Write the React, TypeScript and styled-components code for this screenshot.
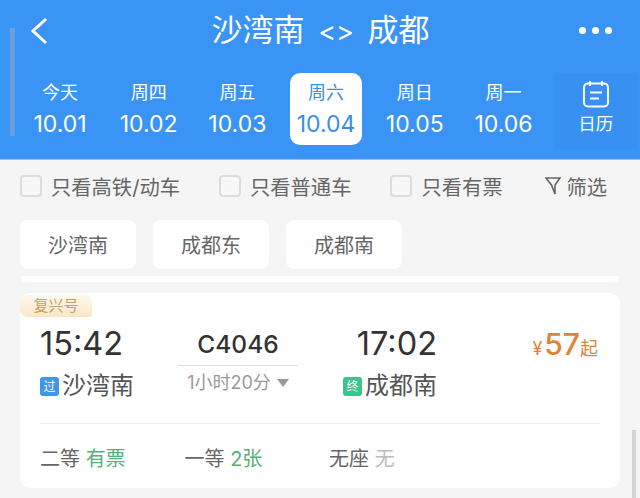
import React from 'react'
import styled, { createGlobalStyle } from 'styled-components'

const days = [
  { week: '今天', date: '10.01' },
  { week: '周四', date: '10.02' },
  { week: '周五', date: '10.03' },
  { week: '周六', date: '10.04', active: true },
  { week: '周日', date: '10.05' },
  { week: '周一', date: '10.06' },
]

const filters = ['只看高铁/动车', '只看普通车', '只看有票']
const stations = ['沙湾南', '成都东', '成都南']

export default function App() {
  return (
    <>
      <GlobalStyle />
      <Page>
        <ScrollLeft />
        <ScrollRight />
        <Header>
          <TitleRow>
            <BackIcon width="20" height="28" viewBox="0 0 20 28" fill="none">
              <path d="M17 2 L4 14 L17 26" stroke="#fff" strokeWidth="3" />
            </BackIcon>
            <Title>沙湾南 <Arrows>&lt;&gt;</Arrows> 成都</Title>
            <Dots>
              <Dot />
              <Dot />
              <Dot />
            </Dots>
          </TitleRow>
          <DateRow>
            {days.map(day => (
              <DayCell key={day.date} $active={day.active}>
                <Week>{day.week}</Week>
                <DateText>{day.date}</DateText>
              </DayCell>
            ))}
            <CalendarCell>
              <svg width="28" height="28" viewBox="0 0 28 28" fill="none" stroke="#fff" strokeWidth="2">
                <rect x="2" y="3.5" width="24" height="23" rx="4" />
                <path d="M8 1 V6 M20 1 V6 M8 12.5 H20 M8 18.5 H17" />
              </svg>
              <CalendarLabel>日历</CalendarLabel>
            </CalendarCell>
          </DateRow>
        </Header>
        <FilterRow>
          {filters.map(label => (
            <Filter key={label}>
              <Check />
              <span>{label}</span>
            </Filter>
          ))}
          <FilterButton>
            <svg width="16" height="18" viewBox="0 0 16 18" fill="none" stroke="#666" strokeWidth="1.6">
              <path d="M1 1 H15 L10 8 V17 L6.5 8 Z" />
            </svg>
            <span>筛选</span>
          </FilterButton>
        </FilterRow>
        <StationRow>
          {stations.map(name => (
            <Chip key={name}>{name}</Chip>
          ))}
        </StationRow>
        <PrevCardEdge />
        <Card>
          <Badge>复兴号</Badge>
          <TrainRow>
            <Stop>
              <Time>15:42</Time>
              <Station>
                <Tag $color="#3f96ea">过</Tag>
                沙湾南
              </Station>
            </Stop>
            <Middle>
              <TrainNo>C4046</TrainNo>
              <Duration>
                1小时20分
                <Caret />
              </Duration>
            </Middle>
            <ArriveStop>
              <Time>17:02</Time>
              <Station>
                <Tag $color="#3cc48d">终</Tag>
                成都南
              </Station>
            </ArriveStop>
            <Price>
              <Yen>¥</Yen>
              <Amount>57</Amount>
              <Qi>起</Qi>
            </Price>
          </TrainRow>
          <Seats>
            <Seat>
              二等 <Avail>有票</Avail>
            </Seat>
            <Seat>
              一等 <Avail>2张</Avail>
            </Seat>
            <Seat>
              无座 <None>无</None>
            </Seat>
          </Seats>
        </Card>
      </Page>
    </>
  )
}

const GlobalStyle = createGlobalStyle`
  body {
    margin: 0;
    background: #f5f5f5;
    font-family: Inter, "Noto Sans CJK SC", sans-serif;
  }
`
const Page = styled.div`
  position: relative;
  width: 640px;
  height: 498px;
  overflow: hidden;
  background: #f5f5f5;
`
const ScrollLeft = styled.div`
  position: absolute;
  left: 10px;
  top: 28px;
  width: 5px;
  height: 108px;
  background: #6a9fdc;
`
const ScrollRight = styled.div`
  position: absolute;
  left: 632px;
  top: 430px;
  width: 4px;
  height: 68px;
  background: #d4d4d4;
`
const Header = styled.header`
  height: 160px;
  background: #3a94f5;
  border-bottom: 1px solid #8ec4f5;
  box-sizing: border-box;
`
const TitleRow = styled.div`
  height: 61px;
  padding: 0 28px 0 29px;
  display: flex;
  align-items: center;
  justify-content: space-between;
`
const BackIcon = styled.svg`
  margin-right: 13px;
`
const Title = styled.h1`
  margin: 0;
  font-size: 31px;
  font-weight: 400;
  color: #fff;
  line-height: 61px;
  word-spacing: 5px;
`
const Arrows = styled.span`
  font-size: 27px;
`
const Dots = styled.div`
  display: flex;
  gap: 6px;
`
const Dot = styled.span`
  width: 7px;
  height: 7px;
  border-radius: 50%;
  background: #fff;
`
const DateRow = styled.div`
  margin-top: 12px;
  padding-left: 16px;
  display: flex;
  align-items: flex-start;
`
const DayCell = styled.div<{ $active?: boolean }>`
  width: 72px;
  margin: 0 8.35px;
  height: 72px;
  border-radius: 10px;
  display: flex;
  flex-direction: column;
  align-items: center;
  justify-content: center;
  gap: 3px;
  color: ${p => (p.$active ? '#3a8ee6' : '#fff')};
  background: ${p => (p.$active ? '#fff' : 'transparent')};
  &:first-child {
    margin-left: 8px;
  }
`
const Week = styled.span`
  font-size: 18px;
  line-height: 26px;
`
const DateText = styled.span`
  font-size: 23px;
  line-height: 30px;
`
const CalendarCell = styled.div`
  width: 84px;
  height: 76px;
  margin-left: 6px;
  background: #3891f2;
  display: flex;
  flex-direction: column;
  align-items: center;
  justify-content: flex-start;
  padding-top: 7px;
  box-sizing: border-box;
  gap: 4px;
  color: #fff;
`
const CalendarLabel = styled.span`
  font-size: 17.5px;
  line-height: 24px;
`
const FilterRow = styled.div`
  height: 52px;
  padding: 0 33px 0 20px;
  display: flex;
  align-items: center;
  gap: 39px;
  font-size: 20.3px;
  color: #666;
`
const Filter = styled.label`
  display: flex;
  align-items: center;
  gap: 9px;
`
const Check = styled.span`
  width: 22px;
  height: 22px;
  box-sizing: border-box;
  border: 2px solid #dcdcdc;
  border-radius: 4px;
  background: #f7f7f7;
`
const FilterButton = styled.div`
  margin-left: auto;
  display: flex;
  align-items: center;
  gap: 5px;
`
const StationRow = styled.div`
  margin-top: 8px;
  padding: 0 20px;
  display: flex;
  gap: 17px;
`
const Chip = styled.div`
  width: 116px;
  height: 49px;
  border-radius: 8px;
  background: #fff;
  color: #666;
  font-size: 20px;
  display: flex;
  align-items: center;
  justify-content: center;
`
const PrevCardEdge = styled.div`
  height: 6px;
  margin: 7px 20px 0;
  background: #fff;
  border-radius: 0 0 8px 8px;
`
const Card = styled.section`
  position: relative;
  height: 195px;
  margin: 11px 20px 0;
  padding: 30px 20px 0;
  box-sizing: border-box;
  background: #fff;
  border-radius: 10px;
`
const Badge = styled.div`
  position: absolute;
  left: 0;
  top: 2px;
  width: 72px;
  height: 22px;
  border-radius: 2px 8px 2px 8px;
  background: linear-gradient(#fff8ec, #fbe6c4);
  color: #c79f68;
  font-size: 15px;
  line-height: 22px;
  text-align: center;
`
const TrainRow = styled.div`
  display: flex;
  align-items: flex-start;
  height: 100px;
`
const Stop = styled.div`
  width: 138px;
`
const ArriveStop = styled(Stop)`
  width: 94px;
  margin-left: 45px;
  text-align: right;
`
const Time = styled.div`
  font-size: 32.5px;
  line-height: 42px;
  color: #333;
`
const Station = styled.div`
  margin-top: 3px;
  font-size: 24px;
  line-height: 36px;
  color: #555;
  display: flex;
  align-items: center;
  gap: 3px;
  white-space: nowrap;
`
const Tag = styled.span<{ $color: string }>`
  width: 19px;
  height: 19px;
  border-radius: 3px;
  background: ${p => p.$color};
  color: #fff;
  font-size: 12px;
  line-height: 19px;
  text-align: center;
`
const Middle = styled.div`
  width: 120px;
  text-align: center;
`
const TrainNo = styled.div`
  font-size: 24.5px;
  font-weight: 500;
  line-height: 42px;
  color: #333;
  border-bottom: 1px solid #ddd;
`
const Duration = styled.div`
  margin-top: 5px;
  font-size: 18px;
  line-height: 24px;
  color: #999;
  display: flex;
  align-items: center;
  justify-content: center;
  gap: 6px;
`
const Caret = styled.span`
  width: 0;
  height: 0;
  border-left: 6px solid transparent;
  border-right: 6px solid transparent;
  border-top: 8px solid #999;
`
const Price = styled.div`
  margin-left: auto;
  margin-right: 2px;
  display: flex;
  align-items: baseline;
  color: #dd8435;
  line-height: 42px;
`
const Yen = styled.span`
  font-size: 18px;
  margin-right: 2px;
`
const Amount = styled.span`
  font-size: 30px;
  font-weight: 500;
`
const Qi = styled.span`
  font-size: 18px;
`
const Seats = styled.div`
  border-top: 1px solid #eee;
  height: 65px;
  padding-top: 2px;
  box-sizing: border-box;
  display: flex;
  align-items: center;
  font-size: 20px;
  color: #666;
`
const Seat = styled.div`
  width: 144.5px;
  white-space: pre;
`
const Avail = styled.span`
  color: #57b07a;
`
const None = styled.span`
  color: #bbb;
`
